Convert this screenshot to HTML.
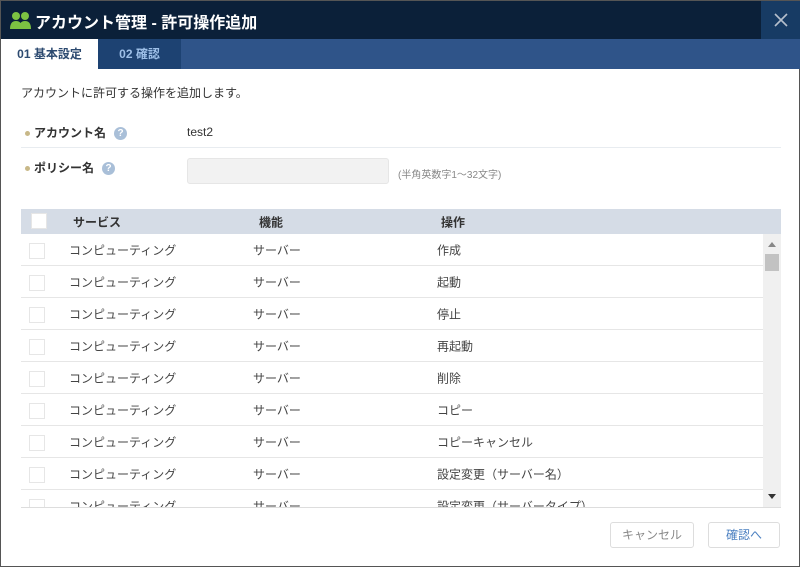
<!DOCTYPE html>
<html><head><meta charset="utf-8"><style>
*{box-sizing:border-box;margin:0;padding:0}
body{width:800px;height:567px;overflow:hidden;background:#fff;font-family:"Liberation Sans","Noto Sans CJK JP",sans-serif;position:relative;border:1px solid #555;}
.title{position:absolute;left:0;top:0;width:800px;height:38px;background:#0b2039;color:#fff;font-size:16px;font-weight:bold;}
.title span{position:absolute;left:34px;top:8px}
.close{position:absolute;left:760px;top:0;width:40px;height:38px;background:#173b64}
.tabs{position:absolute;top:38px;left:0;width:800px;height:30px;background:#2f5489}
.tab{position:absolute;top:0;height:30px;line-height:30px;font-size:12px;font-weight:bold;text-align:center}
.t1{left:0;width:97px;background:#fff;color:#2c4a70}
.t2{left:97px;width:83px;background:#1d4272;color:#9ec0e8}
.txt{position:absolute;font-size:12px;color:#333}
.lbl{position:absolute;font-size:12px;font-weight:bold;color:#333}
.lbl:before{content:"";display:inline-block;width:5px;height:5px;border-radius:50%;background:#c8b888;margin-right:4px;vertical-align:middle}
.q{display:inline-block;width:13px;height:13px;border-radius:50%;background:#a9bfd8;color:#fff;font-size:10px;text-align:center;line-height:13px;margin-left:8px;vertical-align:middle}
.hr{position:absolute;left:20px;width:760px;height:1px;background:#e8ecf0}
.input{position:absolute;left:186px;top:157px;width:202px;height:26px;background:#f2f2f2;border:1px solid #e6e6e6;border-radius:3px}
.table{position:absolute;left:20px;top:208px;width:760px;height:299px;overflow:hidden;border-bottom:1px solid #ddd}
.th{position:absolute;left:0;top:0;width:760px;height:25px;background:#d5dce6;font-size:12px;font-weight:bold;color:#333}
.row{position:absolute;left:0;width:742px;height:32px;border-bottom:1px solid #e6e6e6;font-size:12px;color:#444}
.c{position:absolute;top:50%;transform:translateY(-50%);white-space:nowrap}
.cb{position:absolute;left:8px;top:9px;width:16px;height:16px;border:1px solid #e6e6e6;background:#fff}
.sb{position:absolute;left:742px;top:25px;width:18px;height:274px;background:#f0f0f0}
.btn{position:absolute;top:521px;height:26px;border:1px solid #ddd;border-radius:3px;font-size:12px;text-align:center;line-height:24px;background:#fff}
</style></head><body>
<div class="title"><svg style="position:absolute;left:9px;top:10px" width="22" height="18" viewBox="0 0 22 18"><circle cx="6" cy="5" r="4" fill="#7cc242"/><path d="M0 18 Q0 10 6 10 Q12 10 12 18Z" fill="#7cc242"/><circle cx="15" cy="5" r="4" fill="#7cc242"/><path d="M9 18 Q9 10 15 10 Q21 10 21 18Z" fill="#7cc242"/></svg><span>アカウント管理 - 許可操作追加</span><div class="close"><svg width="40" height="38"><path d="M14 13 L26 25 M26 13 L14 25" stroke="#b5bfcc" stroke-width="1.6"/></svg></div></div>
<div class="tabs"><div class="tab t1">01 基本設定</div><div class="tab t2">02 確認</div></div>
<div class="txt" style="left:20px;top:83px">アカウントに許可する操作を追加します。</div>
<div class="lbl" style="left:24px;top:123px">アカウント名<span class="q">?</span></div>
<div class="txt" style="left:186px;top:124px">test2</div>
<div class="hr" style="top:146px"></div>
<div class="lbl" style="left:24px;top:158px">ポリシー名<span class="q">?</span></div>
<div class="input"></div>
<div class="txt" style="left:397px;top:165px;font-size:10px;color:#888">(半角英数字1～32文字)</div>
<div class="table">
<div class="th"><div class="cb" style="top:4px;left:10px"></div><span class="c" style="left:52px">サービス</span><span class="c" style="left:238px">機能</span><span class="c" style="left:420px">操作</span></div>
<div class="row" style="top:25px"><div class="cb"></div><span class="c" style="left:48px">コンピューティング</span><span class="c" style="left:232px">サーバー</span><span class="c" style="left:416px">作成</span></div>
<div class="row" style="top:57px"><div class="cb"></div><span class="c" style="left:48px">コンピューティング</span><span class="c" style="left:232px">サーバー</span><span class="c" style="left:416px">起動</span></div>
<div class="row" style="top:89px"><div class="cb"></div><span class="c" style="left:48px">コンピューティング</span><span class="c" style="left:232px">サーバー</span><span class="c" style="left:416px">停止</span></div>
<div class="row" style="top:121px"><div class="cb"></div><span class="c" style="left:48px">コンピューティング</span><span class="c" style="left:232px">サーバー</span><span class="c" style="left:416px">再起動</span></div>
<div class="row" style="top:153px"><div class="cb"></div><span class="c" style="left:48px">コンピューティング</span><span class="c" style="left:232px">サーバー</span><span class="c" style="left:416px">削除</span></div>
<div class="row" style="top:185px"><div class="cb"></div><span class="c" style="left:48px">コンピューティング</span><span class="c" style="left:232px">サーバー</span><span class="c" style="left:416px">コピー</span></div>
<div class="row" style="top:217px"><div class="cb"></div><span class="c" style="left:48px">コンピューティング</span><span class="c" style="left:232px">サーバー</span><span class="c" style="left:416px">コピーキャンセル</span></div>
<div class="row" style="top:249px"><div class="cb"></div><span class="c" style="left:48px">コンピューティング</span><span class="c" style="left:232px">サーバー</span><span class="c" style="left:416px">設定変更（サーバー名）</span></div>
<div class="row" style="top:281px"><div class="cb"></div><span class="c" style="left:48px">コンピューティング</span><span class="c" style="left:232px">サーバー</span><span class="c" style="left:416px">設定変更（サーバータイプ）</span></div>
<div class="sb"><div style="position:absolute;left:5px;top:8px;border:4px solid transparent;border-bottom:5px solid #888;border-top:0"></div><div style="position:absolute;left:2px;top:20px;width:14px;height:17px;background:#c2c2c2"></div><div style="position:absolute;left:5px;top:260px;border:4px solid transparent;border-top:5px solid #333;border-bottom:0"></div></div>
</div>
<div class="btn" style="left:609px;width:84px;color:#888">キャンセル</div>
<div class="btn" style="left:707px;width:72px;color:#4a7fc0">確認へ</div>
</body></html>
